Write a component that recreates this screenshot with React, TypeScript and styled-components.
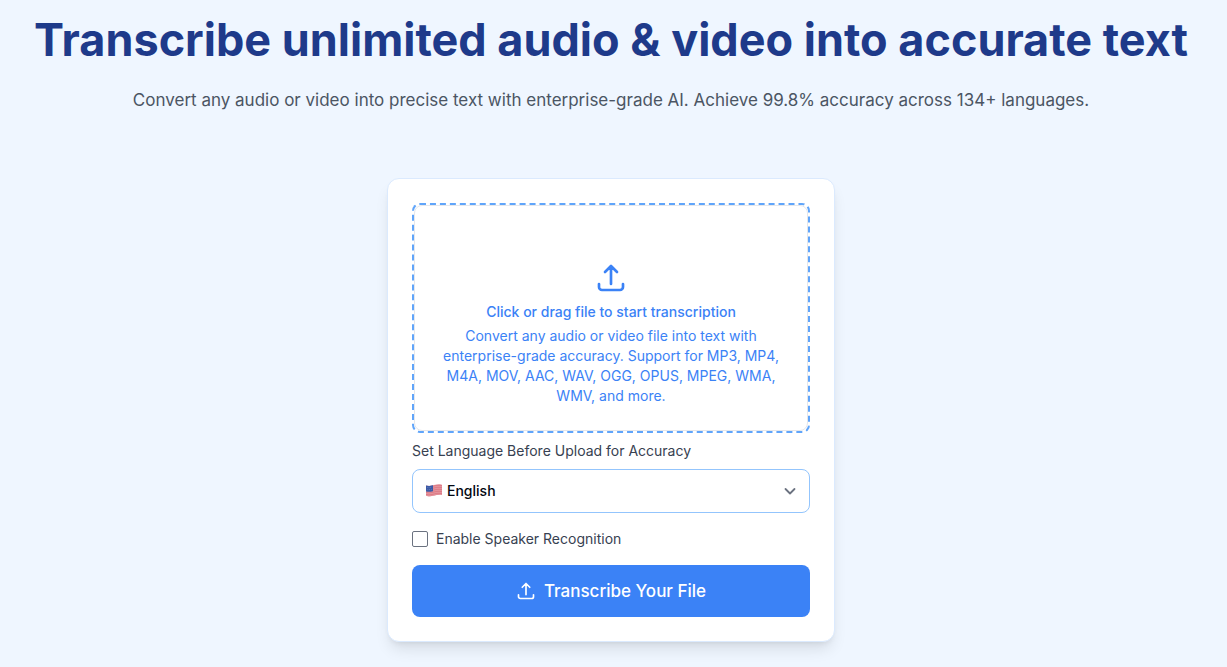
import React from "react";
import styled, { createGlobalStyle } from "styled-components";

const GlobalStyle = createGlobalStyle`
  *, *::before, *::after { box-sizing: border-box; }
  body {
    margin: 0;
    background: #eff6ff;
    font-family: Inter, "Liberation Sans", sans-serif;
    color: #374151;
    font-size: 14px;
    line-height: 20px;
  }
`;

const Hero = styled.main`
  display: flex;
  flex-direction: column;
  align-items: center;
  padding: 16px 21px 24px 16px;
`;

const Title = styled.h1`
  margin: 0 0 22px;
  color: #1e3a8a;
  font-size: 45px;
  line-height: 48px;
  font-weight: 700;
  text-align: center;
`;

const Subtitle = styled.p`
  margin: 0 0 64px;
  color: #4b5563;
  font-size: 17px;
  line-height: 28px;
  text-align: center;
`;

const Card = styled.form`
  display: flex;
  flex-direction: column;
  width: 100%;
  max-width: 448px;
  padding: 24px;
  background: #fff;
  border: 1px solid #dbeafe;
  border-radius: 12px;
  box-shadow: 0 10px 15px -3px rgba(0, 0, 0, 0.1), 0 4px 6px -4px rgba(0, 0, 0, 0.1);
`;

const DropZone = styled.button`
  display: block;
  width: 100%;
  padding: 0;
  background: #fff;
  border: 2px dashed #60a5fa;
  border-radius: 8px;
  color: #3b82f6;
  font: inherit;
  text-align: center;
  cursor: pointer;
`;

const DropContent = styled.span`
  display: flex;
  flex-direction: column;
  align-items: center;
  padding: 56px 24px 24px;
  border: 1px solid #e5e7eb;
  border-radius: 8px;
`;

const DropTitle = styled.span`
  margin: 8px 0 4px;
  font-weight: 500;
`;

const FieldLabel = styled.label`
  margin: 8px 0;
`;

const SelectWrap = styled.div`
  position: relative;
  display: flex;
  align-items: center;
`;

const LanguageSelect = styled.select`
  appearance: none;
  width: 100%;
  height: 44px;
  padding: 0 40px 0 34px;
  background: #fff;
  border: 1px solid #93c5fd;
  border-radius: 8px;
  color: #030712;
  font: inherit;
  font-weight: 500;
`;

const FlagSlot = styled.span`
  position: absolute;
  left: 14px;
  display: flex;
  padding-bottom: 2px;
  pointer-events: none;
`;

const ChevronSlot = styled.span`
  position: absolute;
  right: 13px;
  display: flex;
  pointer-events: none;
`;

const CheckRow = styled.label`
  display: flex;
  align-items: center;
  gap: 8px;
  margin: 16px 0;
`;

const Checkbox = styled.input`
  appearance: none;
  width: 16px;
  height: 16px;
  margin: 0;
  background: #fff;
  border: 1px solid #6b7280;
  border-radius: 2px;
  &:checked {
    background: #3b82f6;
  }
`;

const SubmitButton = styled.button`
  display: flex;
  align-items: center;
  justify-content: center;
  gap: 8px;
  height: 52px;
  background: #3b82f6;
  border: 0;
  border-radius: 8px;
  color: #fff;
  font: inherit;
  font-size: 17px;
  line-height: 28px;
  font-weight: 500;
  cursor: pointer;
`;

const UploadIcon = ({ size, stroke }: { size: number; stroke: number }) => (
  <svg width={size} height={size} viewBox="0 0 24 24" fill="none" stroke="currentColor"
    strokeWidth={stroke} strokeLinecap="round" strokeLinejoin="round" aria-hidden="true">
    <path d="M3 16.5v2.25A2.25 2.25 0 0 0 5.25 21h13.5A2.25 2.25 0 0 0 21 18.75V16.5m-13.5-9L12 3m0 0 4.5 4.5M12 3v13.5" />
  </svg>
);

const UsFlag = () => (
  <svg width="16" height="13" viewBox="0 0 16 13" aria-hidden="true">
    <defs>
      <clipPath id="flag-shape">
        <path d="M0 1.5C3 2.3 5 1.9 8 1.1S13 .1 16 .8V11c-3-.6-5-.2-8 .6S3 12.4 0 11.7Z" />
      </clipPath>
    </defs>
    <g clipPath="url(#flag-shape)">
      <rect width="16" height="13" fill="#e5969f" />
      <path d="M0 2.4C3 3.2 5 2.8 8 2s5-1 8-.3M0 4.4c3 .8 5 .4 8-.4s5-1 8-.3M0 6.4c3 .8 5 .4 8-.4s5-1 8-.3M0 8.4c3 .8 5 .4 8-.4s5-1 8-.3M0 10.4c3 .8 5 .4 8-.4s5-1 8-.3M0 12.1c3 .8 5 .4 8-.4s5-1 8-.3"
        fill="none" stroke="#dc7a85" strokeWidth="1" />
      <path d="M0 0h7v7.2c-2.5 .6-4.5 .8-7 .2Z" fill="#3b5aa6" />
      <path d="M1 3.5h5M1.5 5.5h5" stroke="#8196c9" strokeWidth=".6" strokeDasharray=".7 1" />
    </g>
  </svg>
);

export default function App() {
  return (
    <>
      <GlobalStyle />
      <Hero>
        <Title>Transcribe unlimited audio &amp; video into accurate text</Title>
        <Subtitle>
          Convert any audio or video into precise text with enterprise-grade AI. Achieve 99.8%
          accuracy across 134+ languages.
        </Subtitle>
        <Card onSubmit={(event) => event.preventDefault()}>
          <DropZone type="button">
            <DropContent>
              <UploadIcon size={32} stroke={2} />
              <DropTitle>Click or drag file to start transcription</DropTitle>
              <span>
                Convert any audio or video file into text with enterprise-grade accuracy. Support
                for MP3, MP4, M4A, MOV, AAC, WAV, OGG, OPUS, MPEG, WMA, WMV, and more.
              </span>
            </DropContent>
          </DropZone>
          <FieldLabel htmlFor="language">Set Language Before Upload for Accuracy</FieldLabel>
          <SelectWrap>
            <LanguageSelect id="language" defaultValue="en">
              <option value="en">English</option>
            </LanguageSelect>
            <FlagSlot>
              <UsFlag />
            </FlagSlot>
            <ChevronSlot>
              <svg width="14" height="14" viewBox="0 0 14 14" fill="none" stroke="#6b7280"
                strokeWidth="1.8" strokeLinecap="round" strokeLinejoin="round" aria-hidden="true">
                <path d="M2.5 5 7 9.500 11.5 5" />
              </svg>
            </ChevronSlot>
          </SelectWrap>
          <CheckRow>
            <Checkbox type="checkbox" />
            Enable Speaker Recognition
          </CheckRow>
          <SubmitButton type="submit">
            <UploadIcon size={20} stroke={2} />
            Transcribe Your File
          </SubmitButton>
        </Card>
      </Hero>
    </>
  );
}
